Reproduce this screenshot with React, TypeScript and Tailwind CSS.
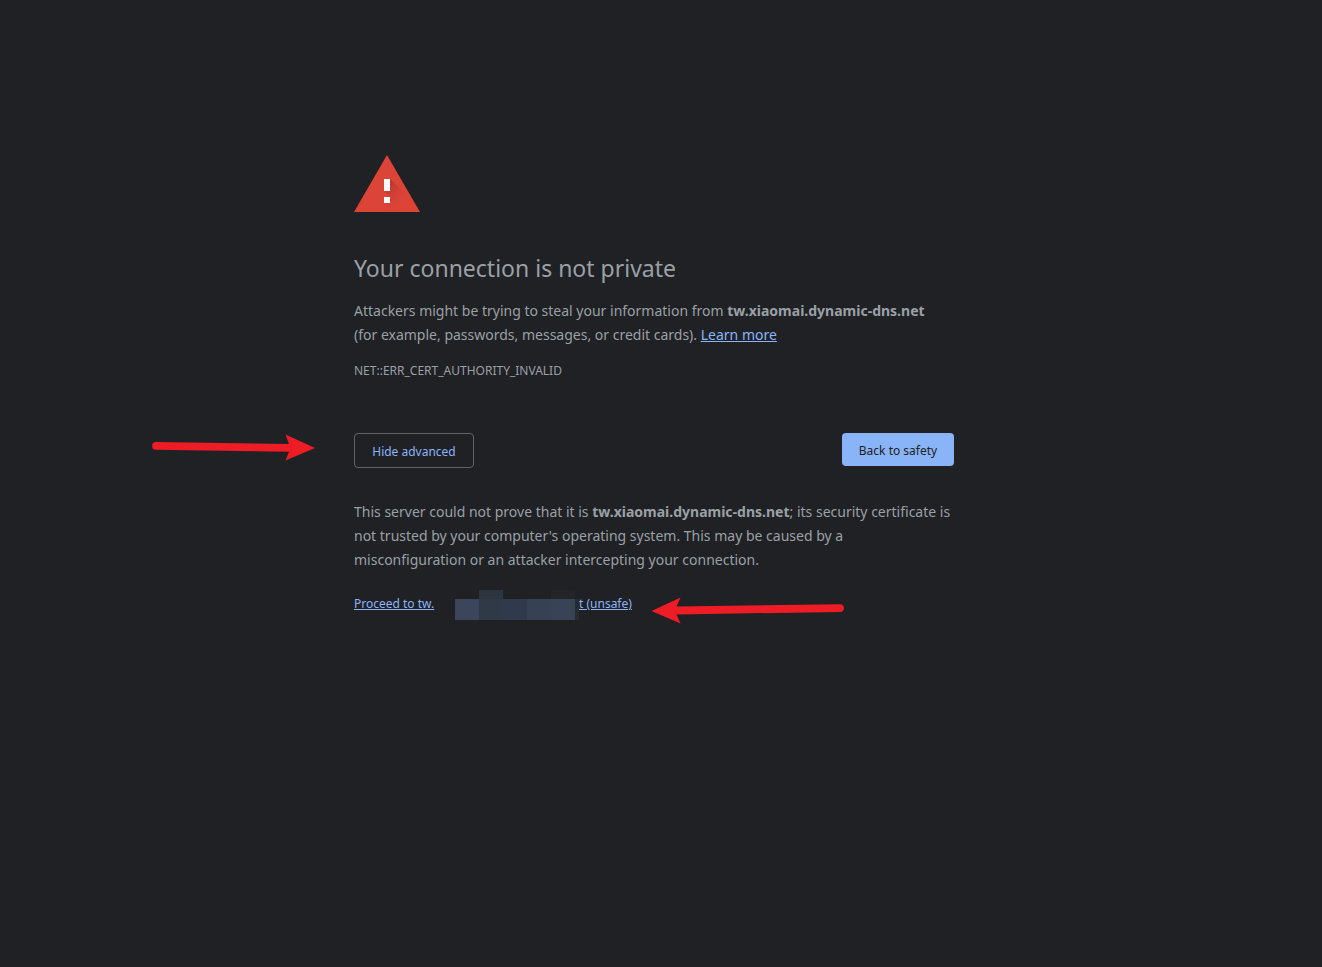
import { useState } from 'react';

const host = 'tw.xiaomai.dynamic-dns.net';

const WarningIcon = () => (
  <svg width="66" height="57" viewBox="0 0 66 57" className="block" aria-hidden="true">
    <defs>
      <linearGradient id="mark-shadow" x1="33" y1="30" x2="50" y2="47" gradientUnits="userSpaceOnUse">
        <stop offset="0" stopColor="#a83228" stopOpacity="0.7" />
        <stop offset="1" stopColor="#db4437" stopOpacity="0" />
      </linearGradient>
    </defs>
    <path d="M33 0 66 57H0z" fill="#db4437" />
    <path d="M36 24 51 39 66 57H39L30 48h6v-6l-6-6h6z" fill="url(#mark-shadow)" />
    <path d="M30 24h6v12h-6zM30 42h6v6h-6z" fill="#fff" />
  </svg>
);

const ArrowRight = () => (
  <svg width="164" height="28" viewBox="0 0 164 28" className="block" aria-hidden="true">
    <path
      d="M4 8.1 137 9.9 133.5 0.5 163 14 133.5 26.5 137 17.7 4 15.8A3.8 3.8 0 0 1 4 8.1z"
      fill="#ee1c24"
    />
  </svg>
);

const ArrowLeft = () => (
  <svg width="194" height="28" viewBox="0 0 194 28" className="block" aria-hidden="true">
    <path
      d="M189 7.2 25.5 9.6 29.5 0.5 0.5 14 29.5 26.5 25.5 17.4 189 15A3.9 3.9 0 0 0 189 7.2z"
      fill="#ee1c24"
    />
  </svg>
);

const HiddenHost = () => (
  <svg width="124" height="30" viewBox="0 0 124 30" className="block" shapeRendering="crispEdges" aria-hidden="true">
    <path d="M0 9h24v21H0z" fill="#3b455c" />
    <path d="M24 0h24v9H24z" fill="#2c3440" />
    <path d="M24 9h24v21H24z" fill="#303a46" />
    <path d="M48 9h24v21H48z" fill="#31394d" />
    <path d="M72 9h24v21H72z" fill="#364154" />
    <path d="M96 0h24v9H96z" fill="#232528" />
    <path d="M96 9h24v21H96z" fill="#384355" />
    <path d="M120 9h4v21h-4z" fill="#272c33" />
  </svg>
);

function App() {
  const [advanced, setAdvanced] = useState(true);

  return (
    <div className="min-h-screen bg-[#202124] pr-3.5 font-['Noto_Sans',sans-serif] text-sm leading-6 text-[#9aa0a6]">
      <main className="mx-auto w-full max-w-[600px] pt-[155px]">
        <WarningIcon />

        <h1 className="mt-10 text-[23px] leading-8">Your connection is not private</h1>
        <p className="mt-[15px]">
          Attackers might be trying to steal your information from{' '}
          <strong className="font-bold">{host}</strong>
          <br />
          (for example, passwords, messages, or credit cards).{' '}
          <a href="#learn" className="text-[#8ab4f8] underline">
            Learn more
          </a>
        </p>
        <p className="mt-3 text-xs leading-6">NET::ERR_CERT_AUTHORITY_INVALID</p>

        <div className="relative mt-[50px] flex items-start justify-between">
          <button
            type="button"
            aria-expanded={advanced}
            onClick={() => setAdvanced((value) => !value)}
            className="h-[35px] w-[120px] cursor-pointer rounded border border-[#5f6368] pt-0.5 text-xs text-[#8ab4f8]"
          >
            {advanced ? 'Hide advanced' : 'Advanced'}
          </button>
          <button
            type="button"
            className="h-[33px] w-28 cursor-pointer rounded bg-[#8ab4f8] pt-0.5 text-xs text-[#202124]"
          >
            Back to safety
          </button>
          <div className="absolute top-px right-full mr-[38px]">
            <ArrowRight />
          </div>
        </div>

        {advanced && (
          <div className="mt-8">
            <p>
              This server could not prove that it is <strong className="font-bold">{host}</strong>;
              its security certificate is not trusted by your computer's operating system. This may
              be caused by a misconfiguration or an attacker intercepting your connection.
            </p>
            <div className="relative mt-5 text-xs leading-6">
              <a href="#proceed" className="inline-flex text-[#8ab4f8]">
                <span className="w-[101px] underline">Proceed to tw.</span>
                <span className="-mt-0.5 h-6">
                  <HiddenHost />
                </span>
                <span className="underline">t (unsafe)</span>
              </a>
              <div className="absolute top-[5px] left-[297px]">
                <ArrowLeft />
              </div>
            </div>
          </div>
        )}
      </main>
    </div>
  );
}

export default App;
